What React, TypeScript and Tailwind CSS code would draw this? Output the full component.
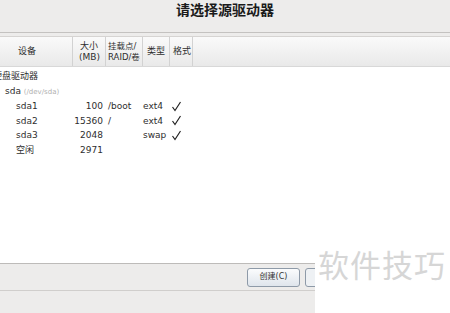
const rows = [
  { name: 'sda1', size: '100', mount: '/boot', type: 'ext4', fmt: true },
  { name: 'sda2', size: '15360', mount: '/', type: 'ext4', fmt: true },
  { name: 'sda3', size: '2048', mount: '', type: 'swap', fmt: true },
  { name: '空闲', size: '2971', mount: '', type: '', fmt: false },
]

function Check() {
  return (
    <svg className="h-[11px] w-[11px]" viewBox="0 0 11 11">
      <path d="M1.5 6 L4 9.5 L9.5 1" fill="none" stroke="#222" strokeWidth="1.2" />
    </svg>
  )
}

export default function App() {
  const font = { fontFamily: '"DejaVu Sans", "Noto Sans CJK SC", sans-serif' }
  return (
    <div className="relative flex h-[313px] w-[450px] flex-col overflow-hidden bg-[#edeceb] text-[#2e2e2e]" style={font}>
      <div className="h-[33px] border-b border-[#c4c2c0] pt-[1px] text-center text-[14px] font-bold leading-[18px] text-[#1a1a1a]">
        请选择源驱动器
      </div>
      <div className="h-[4px] border-b border-[#d6d4d2]" />
      <div className="grid h-[30px] grid-cols-[72px_33px_37px_27px_23px_1fr] whitespace-nowrap border-b border-[#d8d8d8] bg-gradient-to-b from-[#fafafa] to-[#e9e9e9] text-[9px] leading-[11px]">
        <div className="flex items-center pl-[18px]">设备</div>
        <div className="flex flex-col justify-center border-l border-[#d2d2d2] pl-[6px]">
          <span className="pl-[1px]">大小</span>
          <span>(MB)</span>
        </div>
        <div className="flex flex-col justify-center border-l border-[#d2d2d2] pl-[2px] text-[8.5px]">
          <span>挂载点/</span>
          <span>RAID/卷</span>
        </div>
        <div className="flex items-center border-l border-[#d2d2d2] pl-[4px]">类型</div>
        <div className="flex items-center border-l border-[#d2d2d2] pl-[3px]">格式</div>
        <div className="border-l border-[#d2d2d2]" />
      </div>
      <div className="flex h-[196px] flex-col bg-white pt-[2px] text-[9px] leading-[14.5px]">
        <div className="-ml-[7px]">硬盘驱动器</div>
        <div className="pl-[5px]">
          sda <span className="text-[7px] text-[#b0b0b0]">(/dev/sda)</span>
        </div>
        {rows.map((r) => (
          <div className="grid grid-cols-[16px_87px_37px_31px_1fr] items-center" key={r.name}>
            <span />
            <div className="flex justify-between">
              <span>{r.name}</span>
              <span>{r.size}</span>
            </div>
            <span className="pl-[5px]">{r.mount}</span>
            <span className="pl-[3px]">{r.type}</span>
            <span className="flex items-center">{r.fmt && <Check />}</span>
          </div>
        ))}
      </div>
      <div className="flex h-[27px] items-center border-t border-[#bdbbb9] pl-[247px]">
        <button className="h-[19px] w-[53px] rounded-[3px] border border-[#8e9aa8] bg-gradient-to-b from-[#fbfcfd] to-[#dfe5ec] text-[8px] text-[#333]">
          创建(C)
        </button>
        <div className="ml-[5px] h-[19px] w-[20px] rounded-[3px] border border-[#8e9aa8] bg-[#eef1f4]" />
      </div>
      <div className="flex-1 border-t border-[#d0cecc]" />
      <div className="absolute bottom-0 right-0 flex h-[73px] w-[135px] items-start bg-white pl-[3px] pt-[8px]">
        <span className="text-[31px] leading-[36px] tracking-[1px] text-[#d6d6d6]">软件技巧</span>
      </div>
    </div>
  )
}
